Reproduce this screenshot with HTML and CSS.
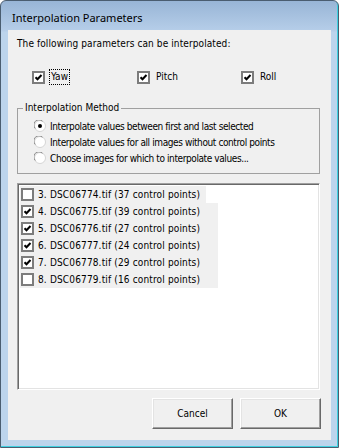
FILE: index.html
```html
<!DOCTYPE html>
<html lang="en">
<head>
  <meta charset="UTF-8">
  <title>Interpolation Parameters</title>
  <link rel="stylesheet" href="styles.css">
</head>
<body>

  <div class="window">
    <div class="titlebar">Interpolation Parameters</div>

    <div class="client">
      <p class="intro">The following parameters can be interpolated:</p>

      <div class="params">
        <label class="check">
          <svg class="cb" viewBox="0 0 13 13"><rect x="1" y="1" width="11" height="11" fill="#fff" stroke="#7c7c7c" stroke-width="2"/><path d="M3.5 6.2l2 2 4-4.2" fill="none" stroke="#000" stroke-width="2"/></svg>
          <span class="focus">Yaw</span>
        </label>
        <label class="check">
          <svg class="cb" viewBox="0 0 13 13"><rect x="1" y="1" width="11" height="11" fill="#fff" stroke="#7c7c7c" stroke-width="2"/><path d="M3.5 6.2l2 2 4-4.2" fill="none" stroke="#000" stroke-width="2"/></svg>
          <span>Pitch</span>
        </label>
        <label class="check">
          <svg class="cb" viewBox="0 0 13 13"><rect x="1" y="1" width="11" height="11" fill="#fff" stroke="#7c7c7c" stroke-width="2"/><path d="M3.5 6.2l2 2 4-4.2" fill="none" stroke="#000" stroke-width="2"/></svg>
          <span>Roll</span>
        </label>
      </div>

      <div class="group">
        <span class="group-title">Interpolation Method</span>
        <label class="radio">
          <svg class="rb" viewBox="0 0 12 12"><circle cx="6" cy="6" r="5.5" fill="#fff" stroke="#d4d4d4"/><path d="M1.3 8.5A5 5 0 0 1 8.5 1.3" fill="none" stroke="#8a8a8a"/><circle cx="6" cy="6" r="2" fill="#000"/></svg>
          <span>Interpolate values between first and last selected</span>
        </label>
        <label class="radio">
          <svg class="rb" viewBox="0 0 12 12"><circle cx="6" cy="6" r="5.5" fill="#fff" stroke="#d4d4d4"/><path d="M1.3 8.5A5 5 0 0 1 8.5 1.3" fill="none" stroke="#8a8a8a"/></svg>
          <span>Interpolate values for all images without control points</span>
        </label>
        <label class="radio">
          <svg class="rb" viewBox="0 0 12 12"><circle cx="6" cy="6" r="5.5" fill="#fff" stroke="#d4d4d4"/><path d="M1.3 8.5A5 5 0 0 1 8.5 1.3" fill="none" stroke="#8a8a8a"/></svg>
          <span>Choose images for which to interpolate values...</span>
        </label>
      </div>

      <div class="list">
        <div class="item item-short">
          <svg class="cb" viewBox="0 0 13 13"><rect x="1" y="1" width="11" height="11" fill="#fff" stroke="#7c7c7c" stroke-width="2"/></svg>
          <span>3. DSC06774.tif (37 control points)</span>
        </div>
        <div class="item">
          <svg class="cb" viewBox="0 0 13 13"><rect x="1" y="1" width="11" height="11" fill="#fff" stroke="#7c7c7c" stroke-width="2"/><path d="M3.5 6.2l2 2 4-4.2" fill="none" stroke="#000" stroke-width="2"/></svg>
          <span>4. DSC06775.tif (39 control points)</span>
        </div>
        <div class="item">
          <svg class="cb" viewBox="0 0 13 13"><rect x="1" y="1" width="11" height="11" fill="#fff" stroke="#7c7c7c" stroke-width="2"/><path d="M3.5 6.2l2 2 4-4.2" fill="none" stroke="#000" stroke-width="2"/></svg>
          <span>5. DSC06776.tif (27 control points)</span>
        </div>
        <div class="item">
          <svg class="cb" viewBox="0 0 13 13"><rect x="1" y="1" width="11" height="11" fill="#fff" stroke="#7c7c7c" stroke-width="2"/><path d="M3.5 6.2l2 2 4-4.2" fill="none" stroke="#000" stroke-width="2"/></svg>
          <span>6. DSC06777.tif (24 control points)</span>
        </div>
        <div class="item">
          <svg class="cb" viewBox="0 0 13 13"><rect x="1" y="1" width="11" height="11" fill="#fff" stroke="#7c7c7c" stroke-width="2"/><path d="M3.5 6.2l2 2 4-4.2" fill="none" stroke="#000" stroke-width="2"/></svg>
          <span>7. DSC06778.tif (29 control points)</span>
        </div>
        <div class="item">
          <svg class="cb" viewBox="0 0 13 13"><rect x="1" y="1" width="11" height="11" fill="#fff" stroke="#7c7c7c" stroke-width="2"/></svg>
          <span>8. DSC06779.tif (16 control points)</span>
        </div>
      </div>

      <div class="buttons">
        <button class="btn">Cancel</button>
        <button class="btn">OK</button>
      </div>
    </div>
  </div>

</body>
</html>
```

FILE: styles.css
```css
html, body {
  margin: 0;
  background: #fff;
}

body {
  font-family: 'DejaVu Sans Condensed', 'Liberation Sans', Arial, sans-serif;
  font-size: 10px;
  color: #000;
}

.window {
  box-sizing: border-box;
  width: 339px;
  height: 448px;
  padding: 0 7px 7px 7px;
  border: 1px solid #4a5d70;
  border-radius: 6px 6px 0 0;
  background: linear-gradient(to bottom, #98b5d6 0, #b6cee9 30px, #bcd4ec 31px, #bcd4ec 100%);
  box-shadow: inset -1px -1px 0 #3fd0e0;
}

.titlebar {
  height: 29px;
  padding-left: 4px;
  line-height: 34px;
  font-family: 'Noto Sans', 'Liberation Sans', sans-serif;
  font-size: 11px;
  color: #000;
}

.client {
  box-sizing: border-box;
  height: 410px;
  padding: 7px 11px 0 9px;
  background: #f0f0f0;
}

.intro {
  margin: 0;
  line-height: 13px;
  letter-spacing: 0.1px;
}

/* checkbox row */
.params {
  display: grid;
  grid-template-columns: 105px 104px auto;
  margin: 19px 0 0 15px;
}

.check {
  display: flex;
  align-items: center;
  gap: 4px;
  height: 16px;
}

.check span {
  padding: 0 1px;
  line-height: 14px;
  border: 1px dotted transparent;
}

.check .focus {
  border-color: #000;
}

.cb {
  display: block;
  width: 13px;
  height: 13px;
  flex: none;
}

/* group box */
.group {
  position: relative;
  margin-top: 23px;
  height: 66px;
  box-sizing: border-box;
  padding: 9px 0 0 16px;
  border: 1px solid #a0a0a0;
}

.group-title {
  position: absolute;
  top: -8px;
  left: 5px;
  padding: 0 2px;
  line-height: 14px;
  background: #f0f0f0;
}

.radio {
  display: flex;
  align-items: center;
  gap: 4px;
  height: 16px;
  letter-spacing: -0.4px;
}

.rb {
  display: block;
  width: 12px;
  height: 12px;
  flex: none;
}

/* list */
.list {
  box-sizing: border-box;
  height: 207px;
  margin-top: 9px;
  padding: 2px 0 0 2px;
  background: #fff;
  border: 1px solid;
  border-color: #a0a0a0 #fff #fff #a0a0a0;
  box-shadow: inset 1px 1px 0 #696969, inset -1px -1px 0 #e3e3e3;
}

.item {
  display: flex;
  align-items: center;
  gap: 4px;
  width: 198px;
  height: 17px;
  padding-left: 1px;
  box-sizing: border-box;
  background: #f0f0f0;
  letter-spacing: 0.15px;
}

.item-short {
  width: 186px;
}

/* buttons */
.buttons {
  display: flex;
  justify-content: flex-end;
  gap: 7px;
  margin-top: 8px;
  margin-right: -1px;
}

.btn {
  width: 81px;
  height: 31px;
  padding: 0;
  font-family: inherit;
  font-size: 10px;
  color: #000;
  background: #f0f0f0;
  border: 1px solid;
  border-color: #fff #696969 #696969 #fff;
  box-shadow: inset -1px -1px 0 #a0a0a0, inset 1px 1px 0 #e3e3e3;
}
```
